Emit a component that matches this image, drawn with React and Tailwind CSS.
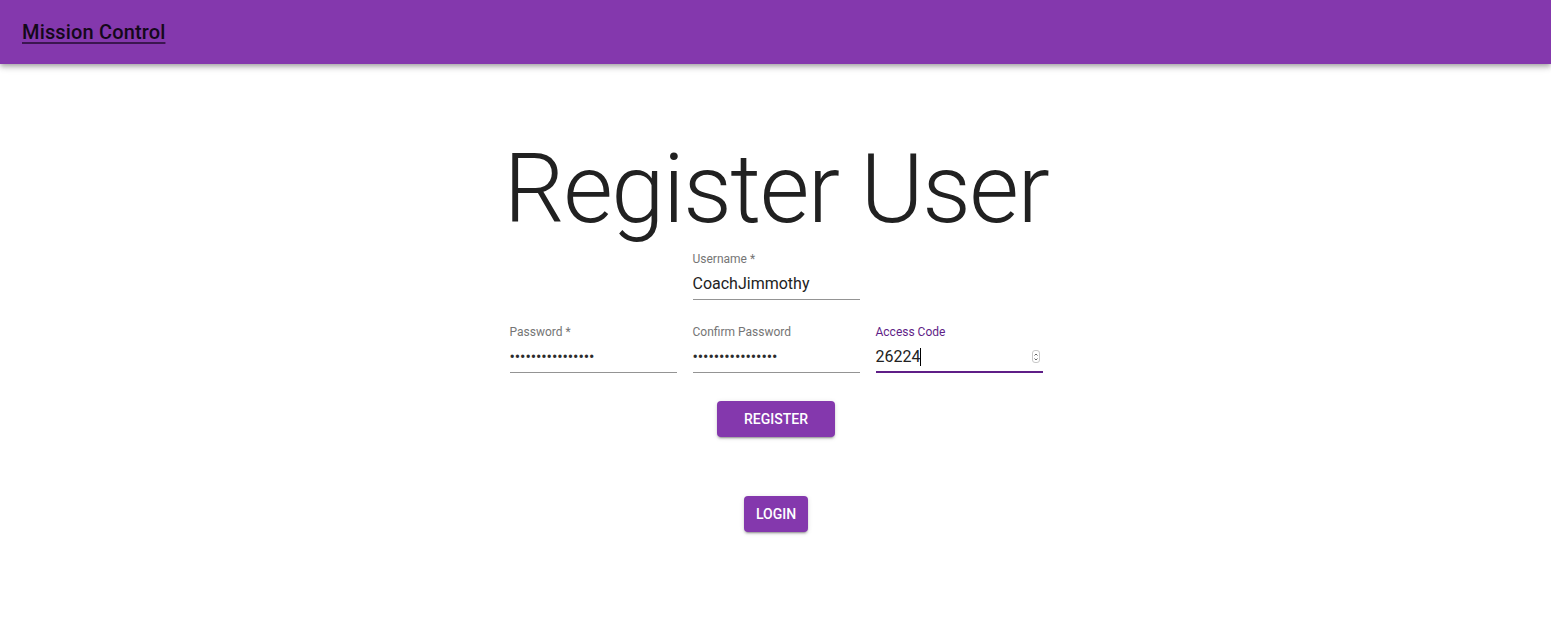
const Field = ({ label, value, focused, dots, caret, spinner }) => {
  return (
    <div className="flex w-[167px] flex-col">
      <div
        className={`h-4 text-xs leading-[15px] ${focused ? "text-[#5f1e87]" : "text-[#757575]"}`}
      >
        {label}
      </div>
      <div
        className={`relative flex h-8 items-start pt-[6px] ${
          focused ? "border-b-2 border-[#5f1e87]" : "border-b border-[#949494]"
        }`}
      >
        {dots ? (
          <span className="text-base leading-[19px] tracking-[-0.1px] text-[#2b2b2b]">
            {"\u2022".repeat(16)}
          </span>
        ) : (
          <span className="text-base leading-[19px] text-[#222]">{value}</span>
        )}
        {caret && <span className="mt-[1px] h-[18px] w-px bg-black" />}
        {spinner && (
          <div className="absolute right-[3px] top-[9px] flex h-[13px] w-[8px] flex-col items-center justify-center rounded-[3px] border border-[#c8c8c8] text-[#555]">
            <svg width="6" height="10" viewBox="0 0 6 10" fill="none" stroke="currentColor" strokeWidth="0.9">
              <path d="M1.5 3.5 L3 2 L4.5 3.5" />
              <path d="M1.5 6.5 L3 8 L4.5 6.5" />
            </svg>
          </div>
        )}
      </div>
    </div>
  );
};

const App = () => {
  return (
    <div className="min-h-[627px] bg-white font-['Roboto',sans-serif]">
      <header className="relative z-10 flex h-16 items-center bg-[#8438ad] px-[22px] shadow-[0_2px_4px_-1px_rgba(0,0,0,0.2),0_4px_5px_0_rgba(0,0,0,0.14),0_1px_10px_0_rgba(0,0,0,0.12)]">
        <a
          href="#"
          className="text-[20px] font-medium leading-8 tracking-[0.15px] text-[#14081a] underline decoration-[#3b1650] underline-offset-[3px]"
        >
          Mission Control
        </a>
      </header>

      <main className="flex flex-col items-center pl-[1px]">
        <h1 className="mt-[69px] text-[96px] font-light leading-[112px] tracking-[-1.5px] text-[#212121]">
          Register User
        </h1>

        <div className="mt-[7px]">
          <Field label="Username *" value="CoachJimmothy" />
        </div>

        <div className="mt-[25px] flex gap-4">
          <Field label="Password *" dots />
          <Field label="Confirm Password" dots />
          <Field label="Access Code" value="26224" focused caret spinner />
        </div>

        <button className="mt-[28px] flex h-9 w-[118px] items-center justify-center rounded bg-[#8438ad] text-sm font-medium uppercase text-white shadow-[0_3px_1px_-2px_rgba(0,0,0,0.2),0_2px_2px_0_rgba(0,0,0,0.14),0_1px_5px_0_rgba(0,0,0,0.12)]">
          Register
        </button>

        <button className="mt-[59px] flex h-9 w-16 items-center justify-center rounded bg-[#8438ad] text-sm font-medium uppercase text-white shadow-[0_3px_1px_-2px_rgba(0,0,0,0.2),0_2px_2px_0_rgba(0,0,0,0.14),0_1px_5px_0_rgba(0,0,0,0.12)]">
          Login
        </button>
      </main>
    </div>
  );
};

export default App;
